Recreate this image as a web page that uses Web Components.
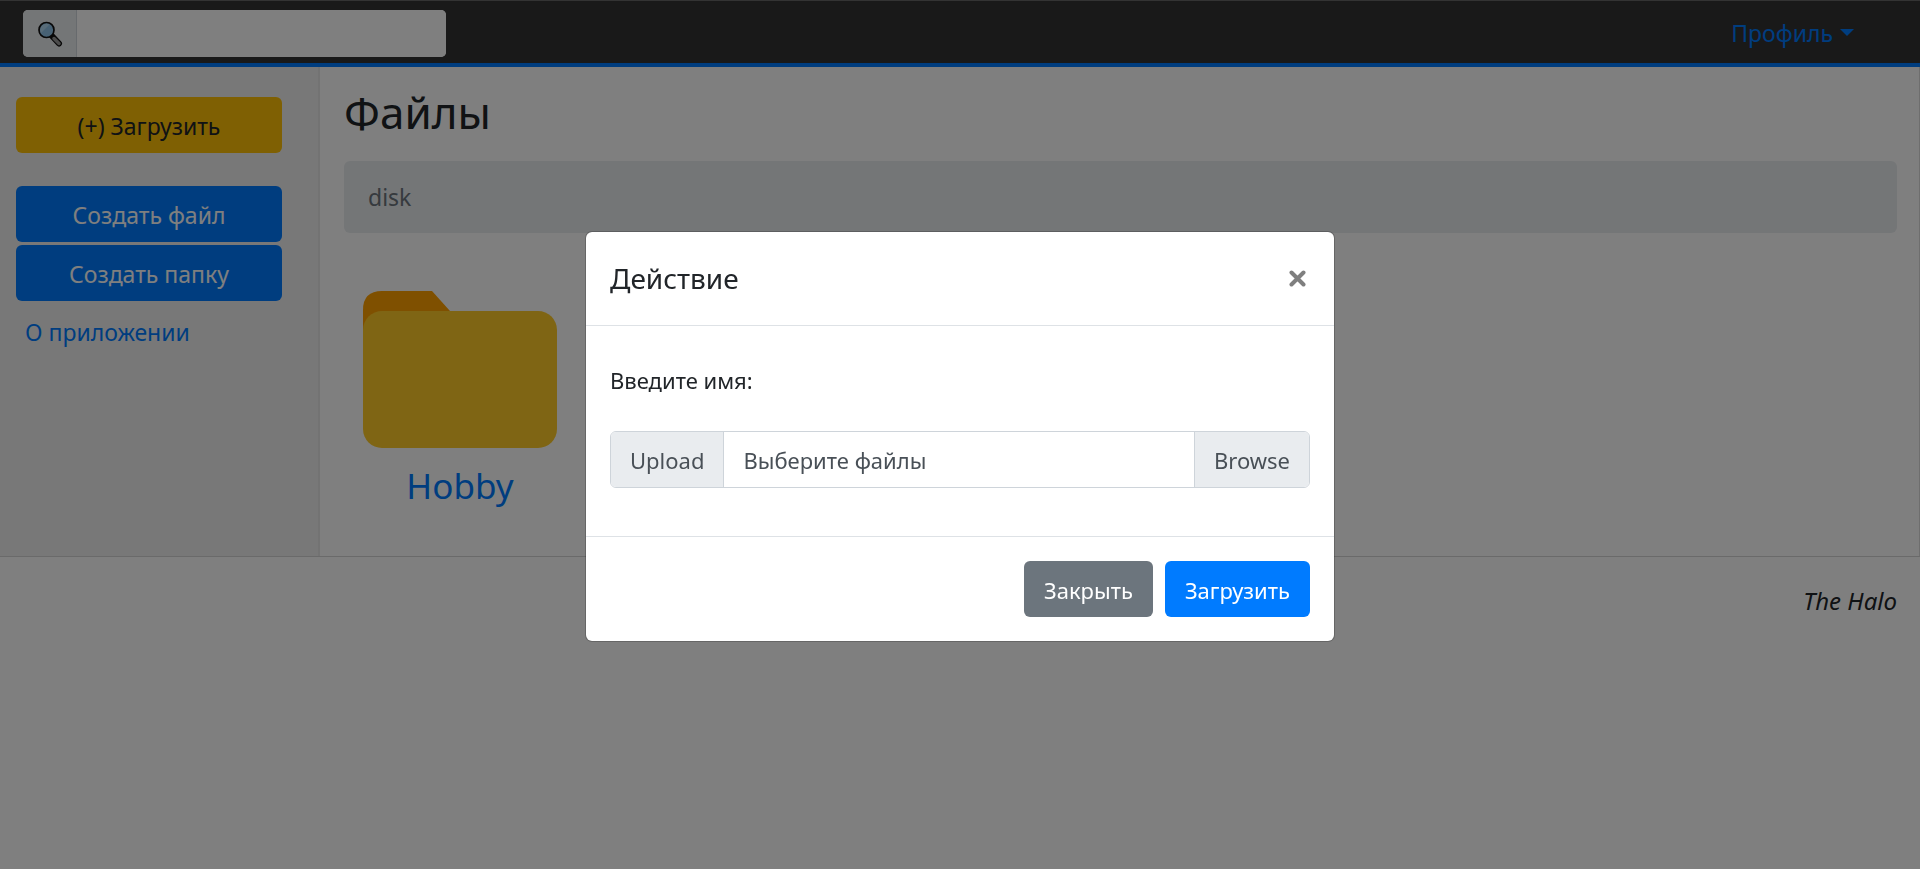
<!DOCTYPE html>
<html lang="ru">
<head>
<meta charset="utf-8">
<meta name="viewport" content="width=device-width, initial-scale=1">
<title>Файлы</title>
<style>
  html, body { margin: 0; min-height: 100%; }
  body {
    background: #fff;
    color: #212529;
    font-family: "Segoe UI", "Noto Sans", "Open Sans", sans-serif;
    font-size: 23px;
    line-height: 36px;
    --blue: #007bff;
    --line: #dee2e6;
    --pad: 24px;
  }
</style>
</head>
<body>
<disk-page></disk-page>

<script>
const define = (name, html, setup) => customElements.define(name, class extends HTMLElement {
  constructor() {
    super();
    this.attachShadow({ mode: 'open' }).innerHTML =
      '<style>*,*::before,*::after{box-sizing:border-box}</style>' + html;
    if (setup) setup(this, this.shadowRoot);
  }
});

define('ui-button', `
  <style>
    :host { display: block; --bg: #007bff; --fg: #fff; }
    :host([kind="warning"]) { --bg: #ffc107; --fg: #212529; }
    :host([kind="secondary"]) { --bg: #6c757d; }
    button {
      display: block; width: 100%; height: 56px; padding: 2px 20px 0;
      border: 0; border-radius: 6px; background: var(--bg); color: var(--fg);
      font: inherit; white-space: nowrap; cursor: pointer;
    }
  </style>
  <button type="button"><slot></slot></button>`);

define('search-box', `
  <style>
    :host { display: flex; width: 423px; height: 47px; border-radius: 5px; overflow: hidden; background: #fff; }
    label { display: flex; align-items: center; justify-content: center; width: 54px; background: #e9ecef; border-right: 1px solid #ced4da; }
    input { flex: 1; min-width: 0; border: 0; padding: 0 16px; font: inherit; outline: 0; background: #fff; }
  </style>
  <label for="q" aria-label="Поиск">
    <svg width="26" height="26" viewBox="0 0 26 26" aria-hidden="true">
      <path d="M15 15 L22 22.500" stroke="#111" stroke-width="6" stroke-linecap="round"/>
      <path d="M17 17.500 L22 22.500" stroke="#999" stroke-width="3.500" stroke-linecap="round"/>
      <circle cx="9.500" cy="9" r="7.500" fill="#8fc3e8" stroke="#111" stroke-width="1.700"/>
      <path d="M4 12 L12.500 3.500 A6.300 6.300 0 0 0 4 12Z" fill="#b0d8f2"/>
    </svg>
  </label>
  <input id="q" type="text">`);

define('profile-menu', `
  <style>
    :host { display: block; }
    button { display: flex; align-items: center; gap: 7px; padding: 0 0 2px; border: 0; background: none; color: var(--blue); font: inherit; cursor: pointer; }
    i { border: 7px solid transparent; border-top-color: currentColor; border-bottom: 0; }
  </style>
  <button type="button" aria-haspopup="true"><span><slot></slot></span><i></i></button>`);

define('top-bar', `
  <style>
    :host {
      display: flex; justify-content: space-between; align-items: center;
      padding: 9px 66px 6px 23px; background: #333;
      border-top: 1px solid #666; border-bottom: 4px solid var(--blue);
    }
  </style>
  <search-box></search-box>
  <profile-menu>Профиль</profile-menu>`);

define('side-bar', `
  <style>
    :host { display: block; padding: 30px 36px 30px 16px; background: #f1f1f1; border-right: 2px solid #e6e6e6; }
    nav { display: flex; flex-direction: column; }
    .main { margin-bottom: 33px; }
    .next { margin-bottom: 3px; }
    a { margin-top: 13px; padding-left: 9px; color: var(--blue); text-decoration: none; }
  </style>
  <nav>
    <ui-button class="main" kind="warning">(+) Загрузить</ui-button>
    <ui-button class="next">Создать файл</ui-button>
    <ui-button>Создать папку</ui-button>
    <a href="#about">О приложении</a>
  </nav>`);

define('folder-tile', `
  <style>
    :host { display: block; width: 194px; }
    a { display: flex; flex-direction: column; align-items: center; gap: 14px; color: var(--blue); text-decoration: none; font-size: 35px; line-height: 48px; }
    svg { display: block; width: 100%; }
  </style>
  <a href="#folder">
    <svg viewBox="0 0 194 157" aria-hidden="true">
      <path d="M0 40 V19 Q0 0 19 0 H69 L87 20 V40Z" fill="#ffa000"/>
      <rect y="20" width="194" height="137" rx="19" fill="#ffca28"/>
    </svg>
    <slot></slot>
  </a>`);

define('file-browser', `
  <style>
    :host { display: block; padding: 16px 22px 46px 24px; border-right: 1px solid #ddd; }
    h1 { margin: 0 0 20px; font-size: 44px; font-weight: 400; line-height: 58px; }
    ol { display: flex; margin: 0 0 58px; padding: 18px var(--pad); border-radius: 6px; background: #e9ecef; color: #6c757d; list-style: none; }
    .grid { display: flex; flex-wrap: wrap; gap: 32px; padding-left: 19px; }
  </style>
  <h1>Файлы</h1>
  <ol aria-label="Путь"><li>disk</li></ol>
  <div class="grid"><folder-tile>Hobby</folder-tile></div>`);

define('file-field', `
  <style>
    :host { display: block; }
    .group { position: relative; display: flex; height: 57px; border: 1px solid #ced4da; border-radius: 6px; overflow: hidden; color: #495057; background: #fff; }
    .group > * { display: flex; align-items: center; padding: 0 19px; white-space: nowrap; }
    .up { background: #e9ecef; border-right: 1px solid #ced4da; }
    label { flex: 1; }
    .browse { background: #e9ecef; border-left: 1px solid #ced4da; }
    input { position: absolute; inset: 0; width: 100%; height: 100%; opacity: 0; cursor: pointer; }
  </style>
  <div class="group">
    <span class="up">Upload</span>
    <label for="file">Выберите файлы</label>
    <span class="browse">Browse</span>
    <input id="file" type="file" multiple>
  </div>`);

define('upload-dialog', `
  <style>
    :host { position: fixed; inset: 0; display: flex; align-items: center; justify-content: center; padding-top: 4px; background: rgba(0,0,0,.5); font-size: 22px; }
    section { width: 750px; max-width: 100%; border: 1px solid rgba(0,0,0,.2); border-radius: 7px; background: #fff; background-clip: padding-box; }
    header { display: flex; align-items: center; justify-content: space-between; padding: var(--pad); border-bottom: 1px solid var(--line); }
    h2 { margin: 0; font-size: 28px; font-weight: 400; line-height: 45px; }
    header button { display: flex; padding: 4px; border: 0; background: none; cursor: pointer; }
    .body { padding: 36px var(--pad) 48px; }
    p { margin: 0 0 33px; }
    footer { display: flex; justify-content: flex-end; gap: 12px; padding: var(--pad); border-top: 1px solid var(--line); }
  </style>
  <section role="dialog" aria-modal="true" aria-labelledby="t">
    <header>
      <h2 id="t">Действие</h2>
      <button type="button" aria-label="Закрыть">
        <svg width="17" height="17" viewBox="0 0 17 17"><path d="M2.500 2.500 L14.500 14.500 M14.500 2.500 L2.500 14.500" stroke="#7f7f7f" stroke-width="4" stroke-linecap="round"/></svg>
      </button>
    </header>
    <div class="body">
      <p>Введите имя:</p>
      <file-field></file-field>
    </div>
    <footer>
      <ui-button class="close" kind="secondary">Закрыть</ui-button>
      <ui-button>Загрузить</ui-button>
    </footer>
  </section>`, (host, root) => {
    const hide = () => host.remove();
    root.querySelector('header button').addEventListener('click', hide);
    root.querySelector('.close').addEventListener('click', hide);
  });

define('disk-page', `
  <style>
    :host { display: block; }
    main { display: grid; grid-template-columns: 1fr 5fr; border-bottom: 1px solid #d4d4d4; }
    footer { padding: 26px 23px; text-align: right; font-size: 24px; font-style: italic; }
  </style>
  <top-bar></top-bar>
  <main>
    <side-bar></side-bar>
    <file-browser></file-browser>
  </main>
  <footer>The Halo</footer>
  <upload-dialog></upload-dialog>`);
</script>
</body>
</html>
